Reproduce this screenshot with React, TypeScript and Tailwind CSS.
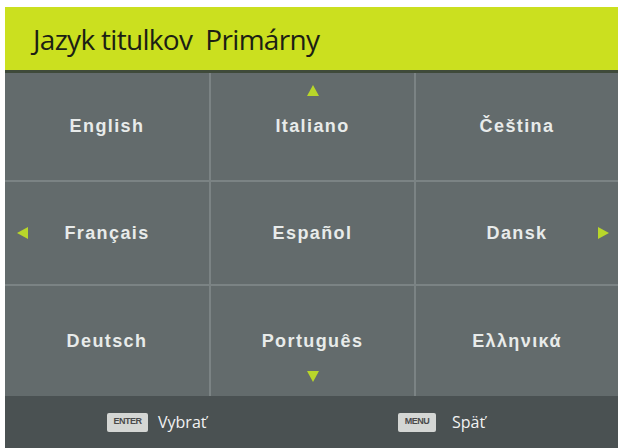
import React from "react";

const Tri = ({ dir, className }: { dir: "up" | "down" | "left" | "right"; className?: string }) => {
  const pts: Record<string, string> = {
    up: "6,0 12,11 0,11",
    down: "0,0 12,0 6,11",
    left: "11,0 11,12 0,6",
    right: "0,0 11,6 0,12",
  };
  const vert = dir === "up" || dir === "down";
  const vb = vert ? "0 0 12 11" : "0 0 11 12";
  return (
    <svg viewBox={vb} width={vert ? 12 : 11} height={vert ? 11 : 12} className={className}>
      <polygon points={pts[dir]} fill="#b8d62a" />
    </svg>
  );
};

const Cell = ({ label, children }: { label: string; children?: React.ReactNode }) => (
  <div className="relative flex items-center justify-center bg-[#636b6c]">
    <span
      className="text-[18px] font-bold tracking-[1.4px] text-[#e8ebea]"
      style={{ fontFamily: '"Liberation Sans", Arial, sans-serif' }}
    >
      {label}
    </span>
    {children}
  </div>
);

export default function App() {
  return (
    <div className="w-[618px] h-[448px] bg-white pl-[5px] pt-[7px] flex flex-col overflow-hidden">
      <div className="h-[63px] bg-[#cbe01f] flex items-center pl-[28px]">
        <span
          className="text-[28px] text-[#1c1f14] tracking-[-0.7px] whitespace-pre leading-none"
          style={{ fontFamily: '"Open Sans", "Noto Sans", sans-serif' }}
        >
          {"Jazyk titulkov  Primárny"}
        </span>
      </div>
      <div className="h-[3px] bg-[#3f4a3a]" />
      <div className="grid grid-cols-[204px_203px_202px] grid-rows-[107px_102px_110px] gap-[2px] bg-[#7b8384]">
        <Cell label="English" />
        <Cell label="Italiano">
          <Tri dir="up" className="absolute left-1/2 -translate-x-1/2 top-[12px]" />
        </Cell>
        <Cell label="Čeština" />
        <Cell label="Français">
          <Tri dir="left" className="absolute left-[12px] top-1/2 -translate-y-1/2" />
        </Cell>
        <Cell label="Español" />
        <Cell label="Dansk">
          <Tri dir="right" className="absolute right-[9px] top-1/2 -translate-y-1/2" />
        </Cell>
        <Cell label="Deutsch" />
        <Cell label="Português">
          <Tri dir="down" className="absolute left-1/2 -translate-x-1/2 bottom-[14px]" />
        </Cell>
        <Cell label="Ελληνικά" />
      </div>
      <div
        className="flex-1 bg-[#4a5152] flex items-center pl-[102px] text-[16px] text-[#f2f2f2]"
        style={{ fontFamily: '"Open Sans", "Noto Sans", sans-serif' }}
      >
        <div className="w-[291px] flex items-center gap-[10px]">
          <span
            className="w-[41px] h-[19px] bg-[#d4d6d4] rounded-[2px] flex items-center justify-center text-[9px] font-bold text-[#4a4a4a] tracking-[-0.5px]"
            style={{ fontFamily: '"Liberation Sans", Arial, sans-serif' }}
          >
            ENTER
          </span>
          <span>Vybrať</span>
        </div>
        <div className="flex items-center gap-[16px]">
          <span
            className="w-[38px] h-[19px] bg-[#d4d6d4] rounded-[2px] flex items-center justify-center text-[9px] font-bold text-[#4a4a4a] tracking-[-0.5px]"
            style={{ fontFamily: '"Liberation Sans", Arial, sans-serif' }}
          >
            MENU
          </span>
          <span>Späť</span>
        </div>
      </div>
    </div>
  );
}
